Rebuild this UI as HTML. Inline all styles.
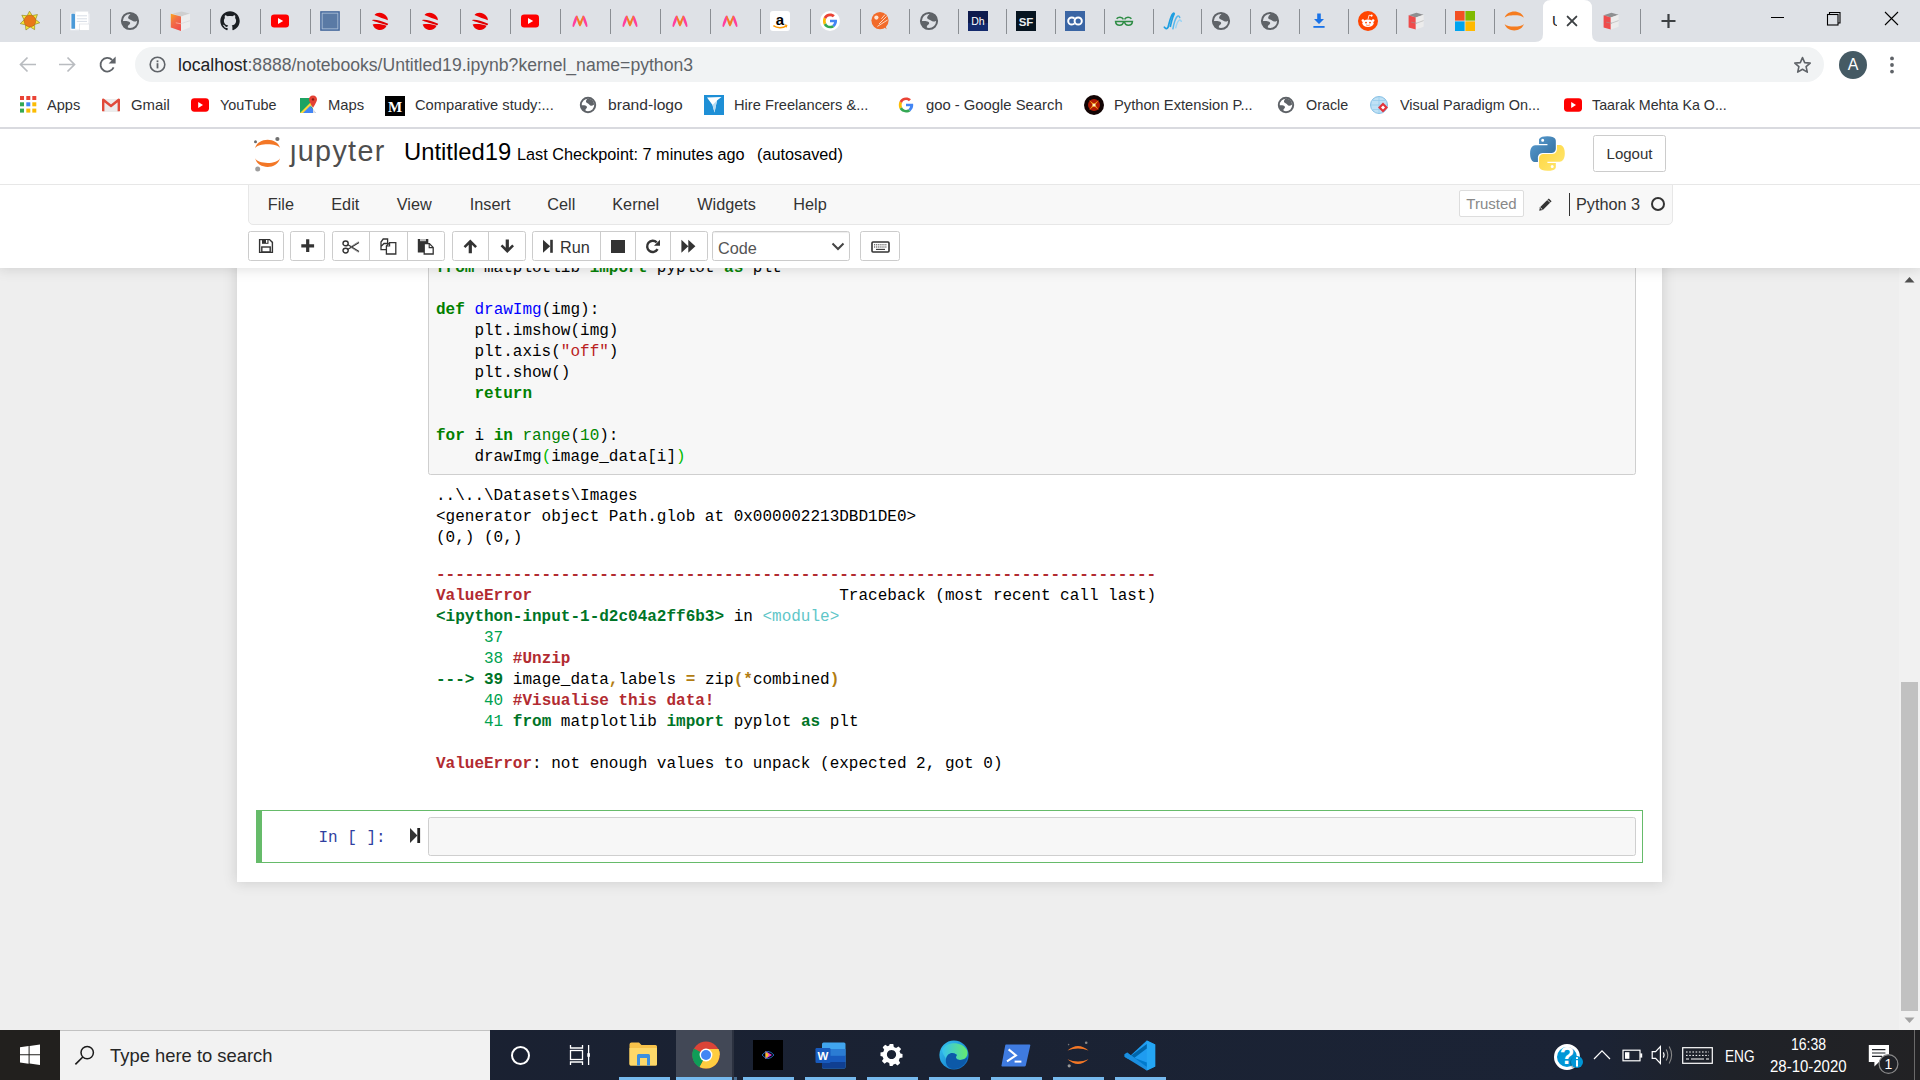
<!DOCTYPE html>
<html><head><meta charset="utf-8">
<style>
*{box-sizing:border-box;margin:0;padding:0}
html,body{width:1920px;height:1080px;overflow:hidden;background:#eee;font-family:"Liberation Sans",sans-serif;position:relative}
.a{position:absolute}
#tabstrip{left:0;top:0;width:1920px;height:42px;background:#dee1e6}
.sep{position:absolute;top:9px;width:1px;height:25px;background:#8a8e93}
.fav{position:absolute;top:11px;width:20px;height:20px}
#toolbar{left:0;top:42px;width:1920px;height:44px;background:#fff}
#omni{left:135px;top:47px;width:1689px;height:35px;border-radius:17.5px;background:#f1f3f4}
#bmbar{left:0;top:86px;width:1920px;height:43px;background:#fff;border-bottom:2px solid #d9dadf;z-index:8}
.bm{position:absolute;z-index:9;top:95px;height:20px;font-size:14.5px;color:#303134;line-height:20px;white-space:nowrap}
.bmi{position:absolute;top:96px;width:17px;height:17px}
#jhead{left:0;top:128px;width:1920px;height:140px;background:#fff;box-shadow:0 0 12px 1px rgba(87,87,87,0.2);z-index:5}
#nb{left:237px;top:200px;width:1425px;height:682px;background:#fff;box-shadow:0 0 12px 1px rgba(87,87,87,0.2)}
.mono{font-family:"Liberation Mono",monospace;font-size:16px;line-height:21px;white-space:pre;color:#000}
.kw{color:#008000;font-weight:bold}
.df{color:#00f}
.bi{color:#008000}
.nm{color:#080}
.st{color:#BA2121}
.mb{color:#0b0}
.ar{color:#b22b31;font-weight:bold}
.ari{color:#b22b31;font-weight:bold}
.agi{color:#007427;font-weight:bold}
.ag{color:#00a250}
.ac{color:#60c6c8}
.ay{color:#b27d12;font-weight:bold}
.tb{top:231px;height:30px;background:#fff;border:1px solid #ccc;border-radius:2.5px}
.dv{top:232px;width:1px;height:28px;background:#ccc}
#scroll{left:1899px;top:268px;width:21px;height:762px;background:#f1f1f1}
#taskbar{left:0;top:1030px;width:1920px;height:50px;background:linear-gradient(90deg,#1a2030 0%,#1a2233 50%,#1b2335 83%,#1f2228 90%,#222224 100%)}
</style></head><body>

<!-- ============ TAB STRIP ============ -->
<div id="tabstrip" class="a"></div>
<!--TABS-->
<div class="sep" style="left:60px"></div>
<div class="sep" style="left:110px"></div>
<div class="sep" style="left:160px"></div>
<div class="sep" style="left:210px"></div>
<div class="sep" style="left:260px"></div>
<div class="sep" style="left:310px"></div>
<div class="sep" style="left:360px"></div>
<div class="sep" style="left:410px"></div>
<div class="sep" style="left:460px"></div>
<div class="sep" style="left:510px"></div>
<div class="sep" style="left:560px"></div>
<div class="sep" style="left:610px"></div>
<div class="sep" style="left:660px"></div>
<div class="sep" style="left:710px"></div>
<div class="sep" style="left:760px"></div>
<div class="sep" style="left:810px"></div>
<div class="sep" style="left:860px"></div>
<div class="sep" style="left:909px"></div>
<div class="sep" style="left:958px"></div>
<div class="sep" style="left:1006px"></div>
<div class="sep" style="left:1055px"></div>
<div class="sep" style="left:1104px"></div>
<div class="sep" style="left:1153px"></div>
<div class="sep" style="left:1201px"></div>
<div class="sep" style="left:1250px"></div>
<div class="sep" style="left:1299px"></div>
<div class="sep" style="left:1348px"></div>
<div class="sep" style="left:1396px"></div>
<div class="sep" style="left:1445px"></div>
<div class="sep" style="left:1494px"></div>
<div class="sep" style="left:1640px"></div>
<svg class="fav" style="left:20px" viewBox="0 0 20 20"><path d="M9.48,0.21 L12.24,4.58 L17.45,3.57 L15.59,8.45 L19.73,11.78 L14.66,13.48 L14.61,18.64 L10.15,15.89 L5.94,19.00 L5.45,13.87 L0.25,12.58 L4.10,8.93 L1.83,4.22 L7.12,4.80 Z" fill="#f5ea3c" stroke="#8a7a10" stroke-width="0.6" stroke-linejoin="round"/><circle cx="9.9" cy="10" r="5.9" fill="#e8781a" stroke="#9a4a08" stroke-width="0.4"/></svg>
<svg class="fav" style="left:70px" viewBox="0 0 20 20"><rect x="0.4" y="2.6" width="19" height="16.6" fill="#fafbfd"/><rect x="5.2" y="0.4" width="13" height="18" fill="#fff" stroke="#e3e6ea" stroke-width="0.4"/><rect x="1.4" y="2.8" width="3.6" height="15" rx="0.6" fill="#4b9ad8"/><path d="M6.8,4.8 H17 M6.8,7.8 H17 M6.8,10.4 H17" stroke="#d7dde6" stroke-width="1"/><rect x="9.6" y="13" width="9.6" height="6.4" fill="#fff" stroke="#d0d4da" stroke-width="0.5"/></svg>
<svg class="fav" style="left:120px" viewBox="0 0 20 20"><circle cx="10" cy="10" r="8.1" fill="none" stroke="#5f6368" stroke-width="2"/><path d="M11.1,2.2 C9.5,4 7.4,6.2 8.4,7.4 C9.6,8.6 11.4,8.6 12.4,9.8 C13.4,11 15.6,10.8 17.6,9.4 L17.8,8 C17,5 14,2.2 11.1,2.2 Z" fill="#5f6368"/><path d="M2,10.2 C4.5,10 7.6,9.8 9.2,10.8 C10.8,11.8 10.4,13.2 8.6,14.2 C7.6,14.8 7.6,16.4 8.4,18.2 C5,17.6 2.2,14.4 2,10.2 Z" fill="#5f6368"/></svg>
<svg class="fav" style="left:170px" viewBox="0 0 20 20"><defs><linearGradient id="cgr" x1="0" y1="0" x2="0.6" y2="1"><stop offset="0" stop-color="#fca71c"/><stop offset="0.45" stop-color="#f26f45"/><stop offset="1" stop-color="#f04f4a"/></linearGradient></defs><path d="M2.8,2.6 L11.6,0.6 L19.6,2.4 L11,5.6 Z" fill="#cfcfcf"/><path d="M0.8,2.8 L11,5.6 V19.9 L0.8,16.6 Z" fill="url(#cgr)"/><path d="M11,5.6 L20.4,2.6 V16 L11,19.9 Z" fill="#ededed"/><path d="M11,12.6 L20.4,9.6" stroke="#dcdcdc" stroke-width="0.9"/><path d="M5.8,11.8 L11,12.8" stroke="#f7b4a6" stroke-width="0.8"/></svg>
<svg class="fav" style="left:220px" viewBox="0 0 20 20"><path fill="#1b1f23" fill-rule="evenodd" d="M10,0.3C4.6,0.3 0.3,4.6 0.3,10C0.3,14.3 3.1,17.9 6.9,19.2C7.4,19.3 7.6,19 7.6,18.7V17C4.9,17.6 4.3,15.8 4.3,15.8C3.9,14.7 3.2,14.4 3.2,14.4C2.3,13.8 3.3,13.8 3.3,13.8C4.3,13.9 4.8,14.8 4.8,14.8C5.7,16.3 7.1,15.9 7.6,15.6C7.7,15 8,14.5 8.3,14.3C6.2,14.1 3.9,13.2 3.9,9.5C3.9,8.4 4.3,7.6 4.9,6.9C4.8,6.6 4.5,5.6 5,4.3C5,4.3 5.8,4 7.7,5.3C8.5,5.1 9.2,5 10,5C10.8,5 11.6,5.1 12.3,5.3C14.2,4 15,4.3 15,4.3C15.5,5.6 15.2,6.6 15.1,6.9C15.7,7.6 16.1,8.4 16.1,9.5C16.1,13.2 13.8,14.1 11.7,14.3C12,14.6 12.4,15.2 12.4,16.1V18.7C12.4,19 12.6,19.3 13.1,19.2C16.9,17.9 19.7,14.3 19.7,10C19.7,4.6 15.4,0.3 10,0.3Z"/></svg>
<svg class="fav" style="left:270px" viewBox="0 0 20 20"><rect x="1" y="3.5" width="18" height="13" rx="3.2" fill="#f00"/><path d="M8,7 L13.2,10 L8,13 Z" fill="#fff"/></svg>
<svg class="fav" style="left:320px" viewBox="0 0 20 20"><rect x="0.2" y="0.2" width="19.6" height="19.6" fill="#3f649a"/><rect x="1.6" y="1.6" width="16.8" height="16.8" fill="#a9bcd6"/><rect x="2.6" y="2.6" width="14.8" height="14.8" fill="#5a7aa5"/></svg>
<svg class="fav" style="left:370px" viewBox="0 0 20 20"><path d="M4.5,4 C7,1 13,0.6 17.2,6.2 C17.6,7.2 18,8.8 17.8,9.2 C14,7.6 9.4,6.4 4.5,4 Z" fill="#e00"/><path d="M1.8,9.2 C5,8 10,9.6 18.2,12.8 C18,13.8 17.4,14.4 17,14.2 C12,12.4 5,10.8 1.8,9.2 Z" fill="#d00"/><path d="M2.6,13.4 C7,12.6 12,13 16.6,14.8 C14.8,18.6 11,19.6 8,18.8 C5.4,18 3.6,16 2.6,13.4 Z" fill="#e00"/></svg>
<svg class="fav" style="left:420px" viewBox="0 0 20 20"><path d="M4.5,4 C7,1 13,0.6 17.2,6.2 C17.6,7.2 18,8.8 17.8,9.2 C14,7.6 9.4,6.4 4.5,4 Z" fill="#e00"/><path d="M1.8,9.2 C5,8 10,9.6 18.2,12.8 C18,13.8 17.4,14.4 17,14.2 C12,12.4 5,10.8 1.8,9.2 Z" fill="#d00"/><path d="M2.6,13.4 C7,12.6 12,13 16.6,14.8 C14.8,18.6 11,19.6 8,18.8 C5.4,18 3.6,16 2.6,13.4 Z" fill="#e00"/></svg>
<svg class="fav" style="left:470px" viewBox="0 0 20 20"><path d="M4.5,4 C7,1 13,0.6 17.2,6.2 C17.6,7.2 18,8.8 17.8,9.2 C14,7.6 9.4,6.4 4.5,4 Z" fill="#e00"/><path d="M1.8,9.2 C5,8 10,9.6 18.2,12.8 C18,13.8 17.4,14.4 17,14.2 C12,12.4 5,10.8 1.8,9.2 Z" fill="#d00"/><path d="M2.6,13.4 C7,12.6 12,13 16.6,14.8 C14.8,18.6 11,19.6 8,18.8 C5.4,18 3.6,16 2.6,13.4 Z" fill="#e00"/></svg>
<svg class="fav" style="left:520px" viewBox="0 0 20 20"><rect x="1" y="3.5" width="18" height="13" rx="3.2" fill="#f00"/><path d="M8,7 L13.2,10 L8,13 Z" fill="#fff"/></svg>
<svg class="fav" style="left:570px" viewBox="0 0 20 20"><path d="M2.6,15.6 C2,14.6 4,8 5.8,5 C6.6,3.8 7.6,4.6 7.6,5.6 C7.2,9 5,14 3.8,15.8 C3.4,16.2 2.9,16.1 2.6,15.6 Z" fill="#ff3f9f"/><path d="M17.4,15.6 C18,14.6 16,8 14.2,5 C13.4,3.8 12.4,4.6 12.4,5.6 C12.8,9 15,14 16.2,15.8 C16.6,16.2 17.1,16.1 17.4,15.6 Z" fill="#ff3f9f"/><path d="M6.2,5.2 C7.2,4.2 8,5.6 10,10.8 C12,5.6 12.8,4.2 13.8,5.2 C13.2,9 11.6,14.2 10,15.6 C8.4,14.2 6.8,9 6.2,5.2 Z" fill="#f47f24"/></svg>
<svg class="fav" style="left:620px" viewBox="0 0 20 20"><path d="M2.6,15.6 C2,14.6 4,8 5.8,5 C6.6,3.8 7.6,4.6 7.6,5.6 C7.2,9 5,14 3.8,15.8 C3.4,16.2 2.9,16.1 2.6,15.6 Z" fill="#ff3f9f"/><path d="M17.4,15.6 C18,14.6 16,8 14.2,5 C13.4,3.8 12.4,4.6 12.4,5.6 C12.8,9 15,14 16.2,15.8 C16.6,16.2 17.1,16.1 17.4,15.6 Z" fill="#ff3f9f"/><path d="M6.2,5.2 C7.2,4.2 8,5.6 10,10.8 C12,5.6 12.8,4.2 13.8,5.2 C13.2,9 11.6,14.2 10,15.6 C8.4,14.2 6.8,9 6.2,5.2 Z" fill="#f47f24"/></svg>
<svg class="fav" style="left:670px" viewBox="0 0 20 20"><path d="M2.6,15.6 C2,14.6 4,8 5.8,5 C6.6,3.8 7.6,4.6 7.6,5.6 C7.2,9 5,14 3.8,15.8 C3.4,16.2 2.9,16.1 2.6,15.6 Z" fill="#ff3f9f"/><path d="M17.4,15.6 C18,14.6 16,8 14.2,5 C13.4,3.8 12.4,4.6 12.4,5.6 C12.8,9 15,14 16.2,15.8 C16.6,16.2 17.1,16.1 17.4,15.6 Z" fill="#ff3f9f"/><path d="M6.2,5.2 C7.2,4.2 8,5.6 10,10.8 C12,5.6 12.8,4.2 13.8,5.2 C13.2,9 11.6,14.2 10,15.6 C8.4,14.2 6.8,9 6.2,5.2 Z" fill="#f47f24"/></svg>
<svg class="fav" style="left:720px" viewBox="0 0 20 20"><path d="M2.6,15.6 C2,14.6 4,8 5.8,5 C6.6,3.8 7.6,4.6 7.6,5.6 C7.2,9 5,14 3.8,15.8 C3.4,16.2 2.9,16.1 2.6,15.6 Z" fill="#ff3f9f"/><path d="M17.4,15.6 C18,14.6 16,8 14.2,5 C13.4,3.8 12.4,4.6 12.4,5.6 C12.8,9 15,14 16.2,15.8 C16.6,16.2 17.1,16.1 17.4,15.6 Z" fill="#ff3f9f"/><path d="M6.2,5.2 C7.2,4.2 8,5.6 10,10.8 C12,5.6 12.8,4.2 13.8,5.2 C13.2,9 11.6,14.2 10,15.6 C8.4,14.2 6.8,9 6.2,5.2 Z" fill="#f47f24"/></svg>
<svg class="fav" style="left:770px" viewBox="0 0 20 20"><rect x="0" y="0" width="20" height="20" rx="3" fill="#fff"/><text x="10" y="13.6" text-anchor="middle" font-family="Liberation Sans" font-weight="bold" font-size="15" fill="#000">a</text><path d="M3.4,14.6 C7,17.2 12.6,17.4 16.4,14.8" fill="none" stroke="#f90" stroke-width="1.5"/><path d="M14.6,13.8 L16.8,14.4 L16.2,16.4" fill="none" stroke="#f90" stroke-width="1.1"/></svg>
<svg class="fav" style="left:820px" viewBox="0 0 20 20"><circle cx="10" cy="10" r="10" fill="#fff"/><g transform="translate(10 10) scale(1.3) translate(-10 -10)"><path d="M15.4,10.2 C15.4,9.8 15.4,9.4 15.3,9 H10 V11 H13.1 C12.9,12 12.4,12.7 11.6,13.2 L13.3,14.6 C14.6,13.4 15.4,11.9 15.4,10.2 Z" fill="#4285f4"/><path d="M10,15.6 C11.5,15.6 12.7,15.1 13.3,14.6 L11.6,13.2 C11.1,13.5 10.6,13.7 10,13.7 C8.6,13.7 7.4,12.8 7,11.5 L5.2,12.9 C6.1,14.6 7.9,15.6 10,15.6 Z" fill="#34a853"/><path d="M7,11.5 C6.8,11 6.7,10.5 6.7,10 C6.7,9.5 6.8,9 7,8.5 L5.2,7.1 C4.8,7.9 4.6,8.9 4.6,10 C4.6,11.1 4.8,12.1 5.2,12.9 Z" fill="#fbbc05"/><path d="M10,6.3 C10.9,6.3 11.6,6.6 12.2,7.1 L13.7,5.6 C12.7,4.8 11.5,4.3 10,4.3 C7.9,4.3 6.1,5.4 5.2,7.1 L7,8.5 C7.4,7.2 8.6,6.3 10,6.3 Z" fill="#ea4335"/></g></svg>
<svg class="fav" style="left:870px" viewBox="0 0 20 20"><circle cx="10" cy="9.6" r="8.6" fill="#f26b2a"/><path d="M13,15.6 L16.8,18.2 L14.6,13.6 Z" fill="#f26b2a"/><circle cx="6.4" cy="6.6" r="2.1" fill="#fde3d3"/><path d="M9,13 L16.6,5.4 M7.4,15.4 L17.6,9 M11.4,7.8 L15,3.6" stroke="#fde3d3" stroke-width="0.9"/></svg>
<svg class="fav" style="left:918.75px" viewBox="0 0 20 20"><circle cx="10" cy="10" r="8.1" fill="none" stroke="#5f6368" stroke-width="2"/><path d="M11.1,2.2 C9.5,4 7.4,6.2 8.4,7.4 C9.6,8.6 11.4,8.6 12.4,9.8 C13.4,11 15.6,10.8 17.6,9.4 L17.8,8 C17,5 14,2.2 11.1,2.2 Z" fill="#5f6368"/><path d="M2,10.2 C4.5,10 7.6,9.8 9.2,10.8 C10.8,11.8 10.4,13.2 8.6,14.2 C7.6,14.8 7.6,16.4 8.4,18.2 C5,17.6 2.2,14.4 2,10.2 Z" fill="#5f6368"/></svg>
<svg class="fav" style="left:968px" viewBox="0 0 20 20"><rect x="0" y="0" width="20" height="20" fill="#0e1b4d"/><rect x="0" y="12" width="20" height="8" fill="#17307a" opacity="0.7"/><text x="10" y="14.2" text-anchor="middle" font-family="Liberation Sans" font-size="10.5" fill="#fff">Dh</text></svg>
<svg class="fav" style="left:1015.9px" viewBox="0 0 20 20"><rect x="0" y="0" width="20" height="20" fill="#061420"/><text x="10" y="14.5" text-anchor="middle" font-family="Liberation Sans" font-weight="bold" font-size="11.5" fill="#e8eef2">SF</text></svg>
<svg class="fav" style="left:1065px" viewBox="0 0 20 20"><rect x="0" y="0" width="20" height="20" fill="#3a65a4"/><path d="M9.6,7.6 C8.8,6.8 7.8,6.4 6.8,6.4 C4.8,6.4 3.2,8 3.2,10 C3.2,12 4.8,13.6 6.8,13.6 C7.8,13.6 8.8,13.2 9.6,12.4" fill="none" stroke="#fff" stroke-width="2"/><circle cx="13.2" cy="10" r="3.6" fill="none" stroke="#fff" stroke-width="2"/></svg>
<svg class="fav" style="left:1114px" viewBox="0 0 20 20"><path d="M10,10.6 H1.6 C1.8,13 3.6,14.2 5.6,14.2 C7.6,14.2 9.2,12.8 9.6,10.6 M10,10.6 H18.4 C18.2,13 16.4,14.2 14.4,14.2 C12.4,14.2 10.8,12.8 10.4,10.6 M9.4,8.4 C8.8,7 7.6,6.2 6,6.2 C4.6,6.2 3.4,6.8 2.6,7.8 M10.6,8.4 C11.2,7 12.4,6.2 14,6.2 C15.4,6.2 16.6,6.8 17.4,7.8" fill="none" stroke="#2f8d46" stroke-width="1.5"/></svg>
<svg class="fav" style="left:1163px" viewBox="0 0 20 20"><path d="M1,15.6 C2.2,17.8 4,18.4 5,16.4 C6.4,12 7.4,5 10,2.6 C11,1.8 11.6,2.4 11,3.4 C9.4,6 8.2,12 7.2,16" fill="none" stroke="#1e9ee0" stroke-width="1.7"/><path d="M9.8,18.4 C11,12 12.6,6.6 14.6,5.2 C15.8,4.4 16.6,5.6 16.8,7.2" fill="none" stroke="#55b7ec" stroke-width="1.5"/><path d="M12.6,17.4 C13.6,12.8 14.8,9.6 16.6,9 C17.6,8.8 18.2,9.8 18.4,11" fill="none" stroke="#9bd4f4" stroke-width="1.4"/></svg>
<svg class="fav" style="left:1210.9px" viewBox="0 0 20 20"><circle cx="10" cy="10" r="8.1" fill="none" stroke="#5f6368" stroke-width="2"/><path d="M11.1,2.2 C9.5,4 7.4,6.2 8.4,7.4 C9.6,8.6 11.4,8.6 12.4,9.8 C13.4,11 15.6,10.8 17.6,9.4 L17.8,8 C17,5 14,2.2 11.1,2.2 Z" fill="#5f6368"/><path d="M2,10.2 C4.5,10 7.6,9.8 9.2,10.8 C10.8,11.8 10.4,13.2 8.6,14.2 C7.6,14.8 7.6,16.4 8.4,18.2 C5,17.6 2.2,14.4 2,10.2 Z" fill="#5f6368"/></svg>
<svg class="fav" style="left:1260px" viewBox="0 0 20 20"><circle cx="10" cy="10" r="8.1" fill="none" stroke="#5f6368" stroke-width="2"/><path d="M11.1,2.2 C9.5,4 7.4,6.2 8.4,7.4 C9.6,8.6 11.4,8.6 12.4,9.8 C13.4,11 15.6,10.8 17.6,9.4 L17.8,8 C17,5 14,2.2 11.1,2.2 Z" fill="#5f6368"/><path d="M2,10.2 C4.5,10 7.6,9.8 9.2,10.8 C10.8,11.8 10.4,13.2 8.6,14.2 C7.6,14.8 7.6,16.4 8.4,18.2 C5,17.6 2.2,14.4 2,10.2 Z" fill="#5f6368"/></svg>
<svg class="fav" style="left:1309px" viewBox="0 0 20 20"><path d="M8.2,2.6 H11.8 V8 H15 L10,13 L5,8 H8.2 Z" fill="#1a73e8"/><rect x="4.4" y="15" width="11.2" height="1.8" fill="#1a73e8"/></svg>
<svg class="fav" style="left:1358px" viewBox="0 0 20 20"><circle cx="10" cy="10" r="10" fill="#ff4500"/><ellipse cx="10" cy="12.2" rx="5.6" ry="3.8" fill="#fff"/><circle cx="4.9" cy="9.6" r="1.3" fill="#fff"/><circle cx="15.1" cy="9.6" r="1.3" fill="#fff"/><circle cx="13.6" cy="4.6" r="1.1" fill="#fff"/><path d="M10,8.4 L11,4.2 L13.6,4.8" fill="none" stroke="#fff" stroke-width="0.8"/><circle cx="8" cy="11.6" r="0.95" fill="#ff4500"/><circle cx="12" cy="11.6" r="0.95" fill="#ff4500"/><path d="M8,13.8 C9.2,14.6 10.8,14.6 12,13.8" fill="none" stroke="#ff4500" stroke-width="0.6"/></svg>
<svg class="fav" style="left:1405.6px" viewBox="0 0 20 20"><path d="M2.6,4.2 L10.4,1.8 L17.6,3.8 L9.8,6.4 Z" fill="#8e8f91"/><path d="M2.6,4.2 L9.8,6.4 L9.8,18.6 L2.6,16.4 Z" fill="#ee4b4b"/><path d="M9.8,6.4 L17.6,3.8 L17.6,15.8 L9.8,18.6 Z" fill="#ececec"/><path d="M9.8,12.4 L17.6,9.6" stroke="#bdbdbd" stroke-width="0.8"/><path d="M5.2,11.2 L10.6,12.2" stroke="#999" stroke-width="0.6"/></svg>
<svg class="fav" style="left:1455px" viewBox="0 0 20 20"><rect x="0" y="0" width="9.6" height="9.6" fill="#f25022"/><rect x="10.4" y="0" width="9.6" height="9.6" fill="#7fba00"/><rect x="0" y="10.4" width="9.6" height="9.6" fill="#00a4ef"/><rect x="10.4" y="10.4" width="9.6" height="9.6" fill="#ffb900"/></svg>
<svg class="fav" style="left:1503.75px" viewBox="0 0 20 20"><path d="M0.65,6.7 C3,-1.7 17.5,-1.7 19.85,6.7 C17.5,3.37 3,3.37 0.65,6.7Z" fill="#f57c1f"/><path d="M0.65,13 C3,21.53 17.5,21.53 19.85,13 C17.5,16.47 3,16.47 0.65,13Z" fill="#f57c1f"/></svg>
<svg class="fav" style="left:1601px" viewBox="0 0 20 20"><path d="M2.6,4.2 L10.4,1.8 L17.6,3.8 L9.8,6.4 Z" fill="#8e8f91"/><path d="M2.6,4.2 L9.8,6.4 L9.8,18.6 L2.6,16.4 Z" fill="#ee4b4b"/><path d="M9.8,6.4 L17.6,3.8 L17.6,15.8 L9.8,18.6 Z" fill="#ececec"/><path d="M9.8,12.4 L17.6,9.6" stroke="#bdbdbd" stroke-width="0.8"/><path d="M5.2,11.2 L10.6,12.2" stroke="#999" stroke-width="0.6"/></svg>
<!--/TABS-->

<!-- ============ TOOLBAR ============ -->
<div id="toolbar" class="a"></div>
<div id="omni" class="a"></div>
<div class="a" style="left:178px;top:53px;font-size:17.6px;line-height:24px;color:#5f6368;white-space:nowrap"><span style="color:#202124">localhost</span>:8888/notebooks/Untitled19.ipynb?kernel_name=python3</div>

<!-- ============ BOOKMARKS ============ -->
<div id="bmbar" class="a"></div>
<!--CHROME-->
<div class="a" style="left:0;top:0;z-index:9">
<svg class="a" style="left:1530px;top:0" width="76" height="42" viewBox="1530 0 76 42"><path d="M1535,42 Q1543,42 1543,34 V8 Q1543,0 1551,0 H1584 Q1592,0 1592,8 V34 Q1592,42 1600,42 Z" fill="#fff"/></svg>
<div class="a" style="left:1552px;top:12px;font-size:15px;line-height:18px;color:#202124;width:5px;overflow:hidden;white-space:nowrap">U</div>
<svg class="a" style="left:1566px;top:15px" width="12" height="12" viewBox="0 0 12 12"><path d="M1.6,1.6 L10.4,10.4 M10.4,1.6 L1.6,10.4" stroke="#3c4043" stroke-width="1.9" stroke-linecap="round"/></svg>
<svg class="a" style="left:1660px;top:13px" width="17" height="16" viewBox="0 0 17 16"><path d="M8.5,1 V15 M1.5,8 H15.5" stroke="#3c4043" stroke-width="2.2"/></svg>
<div class="a" style="left:1771px;top:17px;width:13px;height:1.2px;background:#000"></div>
<svg class="a" style="left:1826px;top:11px" width="16" height="15" viewBox="0 0 16 15"><rect x="1.5" y="3.5" width="10.5" height="10.5" fill="none" stroke="#000" stroke-width="1.1"/><path d="M3.5,3.5 V1.5 H14 V12 H12" fill="none" stroke="#000" stroke-width="1.1"/></svg>
<svg class="a" style="left:1884px;top:11px" width="15" height="15" viewBox="0 0 15 15"><path d="M1,1 L14,14 M14,1 L1,14" stroke="#000" stroke-width="1.1"/></svg>
<svg class="a" style="left:18px;top:55px" width="20" height="19" viewBox="0 0 20 19"><path d="M18,9.5 H3.5 M9.5,2.5 L2.5,9.5 L9.5,16.5" fill="none" stroke="#b9bcc0" stroke-width="1.7"/></svg>
<svg class="a" style="left:57px;top:55px" width="20" height="19" viewBox="0 0 20 19"><path d="M2,9.5 H16.5 M10.5,2.5 L17.5,9.5 L10.5,16.5" fill="none" stroke="#b9bcc0" stroke-width="1.7"/></svg>
<svg class="a" style="left:98px;top:55px" width="20" height="20" viewBox="0 0 20 20"><path d="M15.6,12.4 A6.8,6.8 0 1 1 14.2,5" fill="none" stroke="#5f6368" stroke-width="1.8"/><path d="M17.6,1.6 V8.6 H10.6 Z" fill="#5f6368"/></svg>
<svg class="a" style="left:149px;top:56px" width="17" height="17" viewBox="0 0 17 17"><circle cx="8.5" cy="8.5" r="7.3" fill="none" stroke="#5f6368" stroke-width="1.6"/><rect x="7.6" y="7.2" width="1.8" height="5.2" fill="#5f6368"/><rect x="7.6" y="4.4" width="1.8" height="1.8" fill="#5f6368"/></svg>
<svg class="a" style="left:1793px;top:56px" width="19" height="18" viewBox="0 0 19 18"><path d="M9.5,1.6 L11.7,6.6 L17.2,7.1 L13.1,10.7 L14.3,16.1 L9.5,13.3 L4.7,16.1 L5.9,10.7 L1.8,7.1 L7.3,6.6 Z" fill="none" stroke="#5f6368" stroke-width="1.6" stroke-linejoin="round"/></svg>
<div class="a" style="left:1839px;top:51px;width:28px;height:28px;border-radius:50%;background:#455a64;color:#fff;font-size:16px;line-height:28px;text-align:center">A</div>
<svg class="a" style="left:1889px;top:56px" width="6" height="18" viewBox="0 0 6 18"><circle cx="3" cy="2.4" r="1.9" fill="#5f6368"/><circle cx="3" cy="9" r="1.9" fill="#5f6368"/><circle cx="3" cy="15.6" r="1.9" fill="#5f6368"/></svg>
<div class="bm" style="left:47.4px;font-size:15px;transform:scaleX(0.971);transform-origin:0 0">Apps</div>
<div class="bm" style="left:130.5px;font-size:15px;transform:scaleX(0.993);transform-origin:0 0">Gmail</div>
<div class="bm" style="left:219.9px;font-size:15px;transform:scaleX(0.959);transform-origin:0 0">YouTube</div>
<div class="bm" style="left:327.5px;font-size:15px;transform:scaleX(0.986);transform-origin:0 0">Maps</div>
<div class="bm" style="left:414.7px;font-size:15px;transform:scaleX(0.979);transform-origin:0 0">Comparative study:...</div>
<div class="bm" style="left:607.5px;font-size:15px;transform:scaleX(1.042);transform-origin:0 0">brand-logo</div>
<div class="bm" style="left:733.8px;font-size:15px;transform:scaleX(0.977);transform-origin:0 0">Hire Freelancers &amp;...</div>
<div class="bm" style="left:926.1px;font-size:15px;transform:scaleX(0.987);transform-origin:0 0">goo - Google Search</div>
<div class="bm" style="left:1113.8px;font-size:15px;transform:scaleX(0.980);transform-origin:0 0">Python Extension P...</div>
<div class="bm" style="left:1306.1px;font-size:15px;transform:scaleX(0.955);transform-origin:0 0">Oracle</div>
<div class="bm" style="left:1400.1px;font-size:15px;transform:scaleX(0.962);transform-origin:0 0">Visual Paradigm On...</div>
<div class="bm" style="left:1592.4px;font-size:15px;transform:scaleX(0.951);transform-origin:0 0">Taarak Mehta Ka O...</div>
<div class="a" style="left:19.9px;top:96px;line-height:0"><svg width="17" height="17" viewBox="0 0 17 17"><rect x="0" y="0" width="4" height="4" fill="#ea4335"/><rect x="6.3" y="0" width="4" height="4" fill="#ea4335"/><rect x="12.3" y="0" width="4" height="4" fill="#ea4335"/><rect x="0" y="6.3" width="4" height="4" fill="#34a853"/><rect x="6.3" y="6.3" width="4" height="4" fill="#4285f4"/><rect x="12.3" y="6.3" width="4" height="4" fill="#fbbc04"/><rect x="0" y="12.6" width="4" height="4" fill="#34a853"/><rect x="6.3" y="12.6" width="4" height="4" fill="#fbbc04"/><rect x="12.3" y="12.6" width="4" height="4" fill="#fbbc04"/></svg></div>
<div class="a" style="left:102px;top:98px;line-height:0"><svg width="18" height="14" viewBox="0 0 18 14"><rect x="1" y="1" width="16" height="13" fill="#ececec"/><path d="M1.2,13.2 V1.8 L9,8 L16.8,1.8 V13.2" fill="none" stroke="#e04a3a" stroke-width="2.4" stroke-linejoin="round"/></svg></div>
<div class="a" style="left:191px;top:98px;line-height:0"><svg width="18" height="14" viewBox="0 0 18 14"><rect x="0" y="0.2" width="18" height="13.5" rx="3.4" fill="#f00"/><path d="M7.2,4 L12,7 L7.2,10 Z" fill="#fff"/></svg></div>
<div class="a" style="left:300px;top:95px;line-height:0"><svg width="18" height="19" viewBox="0 0 18 19"><path d="M0,3 H13 V18 H0 Z" fill="#1ea362"/><path d="M0,18 L13,5 V9 L4,18 Z" fill="#fdd835"/><path d="M3,18 L10,11 L16,18 Z" fill="#4285f4"/><path d="M11,11 L13,9 V18 L16,18" fill="#e0e0e0"/><path d="M13,0.4 C10.4,0.4 9,2.4 9,4.4 C9,7 13,12 13,13 C13,12 17,7 17,4.4 C17,2.4 15.6,0.4 13,0.4 Z" fill="#e44134"/><circle cx="13" cy="4.4" r="1.2" fill="#8b1a12"/></svg></div>
<div class="a" style="left:385px;top:96px;line-height:0"><svg width="20" height="20" viewBox="0 0 20 20"><rect width="20" height="20" fill="#000"/><text x="10" y="15.5" text-anchor="middle" font-family="Liberation Serif" font-weight="bold" font-size="15" fill="#fff">M</text></svg></div>
<div class="a" style="left:579px;top:96px;line-height:0"><svg width="18" height="18" viewBox="0 0 20 20"><circle cx="10" cy="10" r="8" fill="none" stroke="#5f6368" stroke-width="2.2"/><path d="M9.2,3 C8,4.6 7.2,6.2 8.2,7.2 C9.3,8.2 10.8,8.2 11.6,9.8 C12.2,11 14.6,11.2 16.6,9.6 C17.2,6 14,2.6 9.2,3 Z" fill="#5f6368"/><path d="M2.4,10.6 C4.6,10.2 7.2,10.2 8.4,11.4 C9.6,12.6 8.4,13.8 7.4,14.6 C6.8,15.2 7.4,16.8 8,17.6 C5,16.8 2.6,14 2.4,10.6 Z" fill="#5f6368"/></svg></div>
<div class="a" style="left:704px;top:95px;line-height:0"><svg width="20" height="20" viewBox="0 0 20 20"><rect width="20" height="20" fill="#1e8fd6"/><path d="M3,2.5 L17.5,2 L13,5.5 L10.5,17.5 L8.5,10 Z" fill="#fff"/><path d="M8.5,10 L13,5.5 L10.5,17.5 Z" fill="#b9dcf2"/></svg></div>
<div class="a" style="left:898px;top:97px;line-height:0"><svg width="16" height="16" viewBox="4 4 12 12"><path d="M15.4,10.2 C15.4,9.8 15.4,9.4 15.3,9 H10 V11 H13.1 C12.9,12 12.4,12.7 11.6,13.2 L13.3,14.6 C14.6,13.4 15.4,11.9 15.4,10.2 Z" fill="#4285f4"/><path d="M10,15.6 C11.5,15.6 12.7,15.1 13.3,14.6 L11.6,13.2 C11.1,13.5 10.6,13.7 10,13.7 C8.6,13.7 7.4,12.8 7,11.5 L5.2,12.9 C6.1,14.6 7.9,15.6 10,15.6 Z" fill="#34a853"/><path d="M7,11.5 C6.8,11 6.7,10.5 6.7,10 C6.7,9.5 6.8,9 7,8.5 L5.2,7.1 C4.8,7.9 4.6,8.9 4.6,10 C4.6,11.1 4.8,12.1 5.2,12.9 Z" fill="#fbbc05"/><path d="M10,6.3 C10.9,6.3 11.6,6.6 12.2,7.1 L13.7,5.6 C12.7,4.8 11.5,4.3 10,4.3 C7.9,4.3 6.1,5.4 5.2,7.1 L7,8.5 C7.4,7.2 8.6,6.3 10,6.3 Z" fill="#ea4335"/></svg></div>
<div class="a" style="left:1084px;top:95px;line-height:0"><svg width="20" height="20" viewBox="0 0 20 20"><circle cx="10" cy="10" r="10" fill="#120404"/><circle cx="10" cy="10" r="6" fill="#b01a05"/><path d="M5,5 L10,9 L15,5 L11,10 L15,15 L10,11 L5,15 L9,10 Z" fill="#ffb21e"/><circle cx="10" cy="10" r="1.6" fill="#fff4c0"/></svg></div>
<div class="a" style="left:1277px;top:96px;line-height:0"><svg width="18" height="18" viewBox="0 0 20 20"><circle cx="10" cy="10" r="8" fill="none" stroke="#5f6368" stroke-width="2.2"/><path d="M9.2,3 C8,4.6 7.2,6.2 8.2,7.2 C9.3,8.2 10.8,8.2 11.6,9.8 C12.2,11 14.6,11.2 16.6,9.6 C17.2,6 14,2.6 9.2,3 Z" fill="#5f6368"/><path d="M2.4,10.6 C4.6,10.2 7.2,10.2 8.4,11.4 C9.6,12.6 8.4,13.8 7.4,14.6 C6.8,15.2 7.4,16.8 8,17.6 C5,16.8 2.6,14 2.4,10.6 Z" fill="#5f6368"/></svg></div>
<div class="a" style="left:1370px;top:96px;line-height:0"><svg width="19" height="19" viewBox="0 0 19 19"><circle cx="9" cy="9" r="8.5" fill="#bfe1f5" stroke="#6fb3de" stroke-width="0.8"/><path d="M1,9 H17 M9,1 V17 M3,4.5 H15 M3,13.5 H15" stroke="#8cc6ea" stroke-width="0.6"/><path d="M8,11.5 L13,6.5 L18,11.5 L13,16.5 Z" fill="#e3333b"/><path d="M11,11.5 L13,9.5 L15,11.5 L13,13.5 Z" fill="#fff"/></svg></div>
<div class="a" style="left:1564px;top:98px;line-height:0"><svg width="18" height="14" viewBox="0 0 18 14"><rect x="0" y="0.2" width="18" height="13.5" rx="3.4" fill="#f00"/><path d="M7.2,4 L12,7 L7.2,10 Z" fill="#fff"/></svg></div>
</div>
<!--/CHROME-->

<!-- ============ JUPYTER ============ -->
<div id="nb" class="a"></div>

<!-- code cell 1 input -->
<div class="a" style="left:428px;top:200px;width:1208px;height:275px;background:#f7f7f7;border:1px solid #cfcfcf;border-radius:2.5px"></div>
<div class="a mono" style="left:436px;top:258px"><span class="kw">from</span> matplotlib <span class="kw">import</span> pyplot <span class="kw">as</span> plt

<span class="kw">def</span> <span class="df">drawImg</span>(img):
    plt.imshow(img)
    plt.axis(<span class="st">"off"</span>)
    plt.show()
    <span class="kw">return</span>

<span class="kw">for</span> i <span class="kw">in</span> <span class="bi">range</span>(<span class="nm">10</span>):
    drawImg<span class="mb">(</span>image_data[i]<span class="mb">)</span></div>

<!-- outputs -->
<div class="a mono" style="left:436px;top:486px">..\..\Datasets\Images
&lt;generator object Path.glob at 0x000002213DBD1DE0&gt;
(0,) (0,)</div>
<div class="a mono" style="left:436px;top:565px"><span class="ar">---------------------------------------------------------------------------</span>
<span class="ari">ValueError</span>                                Traceback (most recent call last)
<span class="agi">&lt;ipython-input-1-d2c04a2ff6b3&gt;</span> in <span class="ac">&lt;module&gt;</span>
<span class="ag">     37</span>
<span class="ag">     38</span> <span class="ari">#Unzip</span>
<span class="agi">---&gt; 39</span> image_data<span class="ay">,</span>labels <span class="ay">=</span> zip<span class="ay">(</span><span class="ay">*</span>combined<span class="ay">)</span>
<span class="ag">     40</span> <span class="ari">#Visualise this data!</span>
<span class="ag">     41</span> <span class="agi">from</span> matplotlib <span class="agi">import</span> pyplot <span class="agi">as</span> plt

<span class="ari">ValueError</span>: not enough values to unpack (expected 2, got 0)</div>

<!-- active cell -->
<div class="a" style="left:256px;top:810px;width:1387px;height:53px;border:1px solid #66bb6a;border-left:6px solid #66bb6a"></div>
<div class="a mono" style="left:318.5px;top:828px;color:#303f9f">In [ ]:</div>
<svg class="a" style="left:410px;top:828px" width="11" height="16" viewBox="0 0 11 16"><path d="M0,0 L7.4,7.5 L0,15 Z" fill="#333"/><rect x="7.3" y="0" width="2.8" height="15" fill="#222"/></svg>
<div class="a" style="left:428px;top:817px;width:1208px;height:39px;background:#f7f7f7;border:1px solid #cfcfcf;border-radius:2.5px"></div>

<div id="jhead" class="a"></div>
<div id="hdr" class="a" style="left:0;top:0;z-index:6">
  <!-- full width line -->
  <div class="a" style="left:0;top:184px;width:1920px;height:1px;background:#e7e7e7"></div>
  <!-- logo -->
  <svg class="a" style="left:250px;top:132px" width="40" height="44" viewBox="0 0 40 44">
    <path d="M5.1,16.3 C7.6,4.85 27.6,4.85 30.1,16.2 C27.6,10.85 7.6,10.85 5.1,16.3Z" fill="#f37726"/>
    <path d="M5.1,26.1 C7.6,37.93 27.5,37.93 30,26.3 C27.5,32.6 7.6,32.6 5.1,26.1Z" fill="#f37726"/>
    <circle cx="5.5" cy="9.8" r="1.5" fill="#6b6b6b"/>
    <circle cx="27.4" cy="7" r="2.1" fill="#707070"/>
    <circle cx="7.7" cy="36.9" r="2.5" fill="#9e9e9e"/>
  </svg>
  <svg class="a" style="left:285px;top:132px" width="105" height="40" viewBox="0 0 105 40">
    <text x="5" y="28.8" font-family="Liberation Sans" font-size="28.7" fill="#4e4e4e" textLength="94.3" lengthAdjust="spacing">&#x237;upyter</text>
  </svg>
  <div class="a" style="left:404px;top:138px;font-size:23.8px;line-height:28px;color:#000;white-space:nowrap">Untitled19</div>
  <div class="a" style="left:517px;top:144px;font-size:16.25px;line-height:20px;color:#000;white-space:nowrap">Last Checkpoint: 7 minutes ago</div>
  <div class="a" style="left:757px;top:144px;font-size:16.25px;line-height:20px;color:#000;white-space:nowrap">(autosaved)</div>
  <!-- python logo -->
  <svg class="a" style="left:1530px;top:136px" width="35" height="35" viewBox="0 0 111 111">
    <defs>
      <linearGradient id="pyb" x1="0" y1="0" x2="1" y2="1"><stop offset="0" stop-color="#5a9fd4"/><stop offset="1" stop-color="#306998"/></linearGradient>
      <linearGradient id="pyy" x1="0" y1="0" x2="1" y2="1"><stop offset="0" stop-color="#ffd43b"/><stop offset="1" stop-color="#ffe873"/></linearGradient>
    </defs>
    <path fill="url(#pyb)" d="M54.9,0.5C26.9,0.5 28.6,12.7 28.6,12.7L28.7,25.3H55.4V29.1H18.1C18.1,29.1 0.2,27.1 0.2,55.3C0.2,83.5 15.8,82.5 15.8,82.5H25.1V69.4C25.1,69.4 24.6,53.8 40.5,53.8H67C67,53.8 81.9,54 81.9,39.4V15.3C81.9,15.3 84.2,0.5 54.9,0.5ZM40.2,8.9A4.8,4.8 0 1 1 40.2,18.5A4.8,4.8 0 1 1 40.2,8.9Z"/>
    <path fill="url(#pyy)" d="M55.7,110.2C83.7,110.2 82,98 82,98L81.9,85.4H55.2V81.6H92.5C92.5,81.6 110.4,83.6 110.4,55.4C110.4,27.2 94.8,28.2 94.8,28.2H85.5V41.3C85.5,41.3 86,56.9 70.1,56.9H43.6C43.6,56.9 28.7,56.7 28.7,71.3V95.4C28.7,95.4 26.4,110.2 55.7,110.2ZM70.4,101.8A4.8,4.8 0 1 1 70.4,92.2A4.8,4.8 0 1 1 70.4,101.8Z"/>
  </svg>
  <div class="a" style="left:1593px;top:135px;width:73px;height:37px;border:1px solid #ccc;border-radius:2.5px;font-size:15px;line-height:35px;text-align:center;color:#333">Logout</div>

  <!-- menubar -->
  <div class="a" style="left:248px;top:184px;width:1425px;height:41px;background:#f8f8f8;border:1px solid #e7e7e7;border-radius:0 0 5px 5px"></div>
  <div class="a" style="left:0.75px;top:194px;font-size:16.25px;line-height:20px;color:#333;white-space:nowrap">
    <span class="a" style="left:267px">File</span>
    <span class="a" style="left:330.5px">Edit</span>
    <span class="a" style="left:396px">View</span>
    <span class="a" style="left:469px">Insert</span>
    <span class="a" style="left:546.5px">Cell</span>
    <span class="a" style="left:611.5px">Kernel</span>
    <span class="a" style="left:696.5px">Widgets</span>
    <span class="a" style="left:792.5px">Help</span>
  </div>
  <div class="a" style="left:1459px;top:190px;width:65px;height:27px;border:1px solid #ddd;background:#fff;border-radius:2px;font-size:15px;line-height:25px;text-align:center;color:#888">Trusted</div>
  <svg class="a" style="left:1537px;top:196px" width="17" height="17" viewBox="0 0 17 17"><path d="M2.2,14.8 L3,11.2 L11.8,2.4 L14.6,5.2 L5.8,14 Z" fill="#333"/><path d="M3.2,11.5 L5.5,13.8" stroke="#f8f8f8" stroke-width="0.9"/><path d="M10.4,3.8 L13.2,6.6" stroke="#f8f8f8" stroke-width="0.9"/></svg>
  <div class="a" style="left:1569px;top:193px;width:1.3px;height:23px;background:#333"></div>
  <div class="a" style="left:1576px;top:194px;font-size:16.25px;line-height:20px;color:#333;white-space:nowrap">Python 3</div>
  <div class="a" style="left:1651px;top:197px;width:14px;height:14px;border:2.2px solid #333;border-radius:50%"></div>

  <!-- toolbar -->
  <div class="tb a" style="left:248px;width:36px"></div>
  <div class="tb a" style="left:290px;width:35px"></div>
  <div class="tb a" style="left:332px;width:113px"></div>
  <div class="a dv" style="left:369px"></div><div class="a dv" style="left:407px"></div>
  <div class="tb a" style="left:452px;width:74px"></div>
  <div class="a dv" style="left:488px"></div>
  <div class="tb a" style="left:532px;width:176px"></div>
  <div class="a dv" style="left:600px"></div><div class="a dv" style="left:635px"></div><div class="a dv" style="left:670px"></div>
  <div class="tb a" style="left:712px;width:138px;box-shadow:inset 0 1px 1px rgba(0,0,0,0.075)"></div>
  <div class="tb a" style="left:860px;width:40px"></div>
  <!-- icons -->
  <svg class="a" style="left:258px;top:238px" width="16" height="16" viewBox="0 0 16 16">
    <path d="M1.6,1.6 H11.6 L14.4,4.4 V14.4 H1.6 Z" fill="none" stroke="#333" stroke-width="1.4"/>
    <rect x="4" y="1.2" width="6.5" height="4.6" fill="#333"/>
    <rect x="8" y="2" width="1.4" height="2.8" fill="#fff"/>
    <rect x="3.8" y="9" width="8.4" height="5" fill="none" stroke="#333" stroke-width="1.4"/>
  </svg>
  <svg class="a" style="left:300px;top:238px" width="16" height="16" viewBox="0 0 16 16"><path d="M6.1,1.3 H9.3 V6.2 H14.1 V9.4 H9.3 V14 H6.1 V9.4 H1.3 V6.2 H6.1 Z" fill="#333"/></svg>
  <svg class="a" style="left:342px;top:239px" width="18" height="16" viewBox="0 0 18 16">
    <ellipse cx="3.6" cy="4.4" rx="2.6" ry="2.4" fill="none" stroke="#333" stroke-width="1.4"/>
    <ellipse cx="3.6" cy="11.6" rx="2.6" ry="2.4" fill="none" stroke="#333" stroke-width="1.4"/>
    <path d="M5.6,5.6 L17,12.6 M5.6,10.4 L17,3.4" stroke="#333" stroke-width="1.2"/>
    <path d="M9,7.5 L16.6,2.6 M9,8.5 L16.6,13.4" stroke="#777" stroke-width="0.7"/>
  </svg>
  <svg class="a" style="left:380px;top:238px" width="18" height="17" viewBox="0 0 18 17">
    <path d="M3.2,1 H7.6 V5.5 H4 L1,8.4 V4 Z M1,8.4 V11.6 H6" fill="none" stroke="#333" stroke-width="1.3"/>
    <path d="M7.6,1 L1,8.4" fill="none" stroke="#333" stroke-width="0"/>
    <path d="M9.6,4.6 H15.8 V16 H6.4 V8 Z" fill="#fff" stroke="#333" stroke-width="1.3"/>
    <path d="M6.4,8 H9.6 V4.6" fill="none" stroke="#333" stroke-width="1.2"/>
  </svg>
  <svg class="a" style="left:417px;top:238px" width="18" height="17" viewBox="0 0 18 17">
    <rect x="0.8" y="1" width="10.5" height="13.5" fill="#333"/>
    <rect x="3" y="1" width="6" height="2.2" fill="#bbb"/>
    <path d="M7.2,5.6 H12.4 L16.2,9.4 V16 H7.2 Z" fill="#fff" stroke="#333" stroke-width="1.3"/>
    <path d="M12.2,5.8 V9.6 H16" fill="none" stroke="#333" stroke-width="1.1"/>
  </svg>
  <svg class="a" style="left:463px;top:239px" width="15" height="15" viewBox="0 0 15 15"><path d="M7.3,0.6 L14,7.3 L12.2,9.1 L8.9,5.8 V14.2 H5.7 V5.8 L2.4,9.1 L0.6,7.3 Z" fill="#333"/></svg>
  <svg class="a" style="left:499.5px;top:238.5px" width="15" height="15" viewBox="0 0 15 15"><path d="M7.3,14 L14,7.3 L12.2,5.5 L8.9,8.8 V0.6 H5.7 V8.8 L2.4,5.5 L0.6,7.3 Z" fill="#333"/></svg>
  <svg class="a" style="left:542px;top:239px" width="12" height="15" viewBox="0 0 12 15"><path d="M1,0.8 L8.2,7.3 L1,13.8 Z" fill="#333"/><rect x="8.2" y="0.8" width="2.6" height="13" fill="#333"/></svg>
  <div class="a" style="left:560px;top:237px;font-size:16.25px;line-height:20px;color:#333">Run</div>
  <div class="a" style="left:611px;top:240px;width:14px;height:13px;background:#333"></div>
  <svg class="a" style="left:645px;top:239px" width="16" height="15" viewBox="0 0 16 15">
    <path d="M12.6,10.2 A5.6,5.6 0 1 1 11.7,3.4" fill="none" stroke="#333" stroke-width="2.4"/>
    <path d="M15,0.8 V6.8 H9 Z" fill="#333"/>
  </svg>
  <svg class="a" style="left:681px;top:239px" width="15" height="15" viewBox="0 0 15 15"><path d="M0.4,0.8 L7.3,7.3 L0.4,13.8 Z M7.3,0.8 L14.4,7.3 L7.3,13.8 Z" fill="#333"/></svg>
  <div class="a" style="left:718px;top:238px;font-size:16.25px;line-height:20px;color:#555">Code</div>
  <svg class="a" style="left:831px;top:242px" width="14" height="9" viewBox="0 0 14 9"><path d="M1.5,1.5 L7,7 L12.5,1.5" fill="none" stroke="#444" stroke-width="2"/></svg>
  <svg class="a" style="left:871px;top:241px" width="19" height="12" viewBox="0 0 19 12">
    <rect x="1" y="1" width="17" height="10" rx="1" fill="none" stroke="#333" stroke-width="1.6"/>
    <path d="M3,3.8 H16 M3,6 H16" stroke="#333" stroke-width="1" stroke-dasharray="1.2 0.9"/>
    <path d="M5,8.4 H14" stroke="#333" stroke-width="1.1"/>
  </svg>
</div>

<!-- scrollbar -->
<div id="scroll" class="a"></div>
<div class="a" style="left:1901px;top:682px;width:17px;height:329px;background:#c1c1c1"></div>
<svg class="a" style="left:1904px;top:276px" width="11" height="7" viewBox="0 0 11 7"><path d="M0.5,6.5 L5.5,1 L10.5,6.5 Z" fill="#505050"/></svg>
<svg class="a" style="left:1904px;top:1017px" width="11" height="7" viewBox="0 0 11 7"><path d="M0.5,0.5 L5.5,6 L10.5,0.5 Z" fill="#a3a3a3"/></svg>

<!-- ============ TASKBAR ============ -->
<div id="taskbar" class="a"></div>
<div class="a" style="left:0;top:1030px;width:60px;height:50px;background:#22201e"></div>
<div class="a" style="left:60px;top:1030px;width:430px;height:50px;background:#f2f2f2;border-top:1px solid #c2c2c2"></div>
<div class="a" style="left:110px;top:1043px;font-size:18.4px;line-height:26px;color:#262626;white-space:nowrap">Type here to search</div>
<!--TASK-->
<svg class="a" style="left:19px;top:1044px" width="22" height="22" viewBox="0 0 22 22"><path d="M1,3.2 L9.6,2 V10.3 H1 Z M10.6,1.9 L21,0.5 V10.3 H10.6 Z M1,11.3 H9.6 V19.8 L1,18.6 Z M10.6,11.3 H21 V21 L10.6,19.6 Z" fill="#fff"/></svg>
<svg class="a" style="left:74px;top:1044px" width="22" height="22" viewBox="0 0 22 22"><circle cx="13.2" cy="8.6" r="6.2" fill="none" stroke="#1b1b1b" stroke-width="1.5"/><path d="M8.8,13 L1.4,20.4" stroke="#1b1b1b" stroke-width="1.6"/></svg>
<div class="a" style="left:510.5px;top:1045.5px;width:19px;height:19px;border:2.2px solid #fff;border-radius:50%"></div>
<svg class="a" style="left:569px;top:1044px" width="23" height="22" viewBox="0 0 23 22"><path d="M1.5,1 V4 H13.5 V1 M1.5,21 V18 H13.5 V21" fill="none" stroke="#fff" stroke-width="1.3"/><rect x="1.5" y="6.5" width="12" height="9" fill="none" stroke="#fff" stroke-width="1.3"/><path d="M19.6,1 V21" stroke="#fff" stroke-width="1.3"/><rect x="18.3" y="9.2" width="2.6" height="3.6" fill="#fff"/></svg>
<div class="a" style="left:619px;top:1077px;width:51px;height:3px;background:#76b9ed"></div>
<div class="a" style="left:676px;top:1077px;width:56px;height:3px;background:#76b9ed"></div>
<div class="a" style="left:743px;top:1077px;width:51px;height:3px;background:#76b9ed"></div>
<div class="a" style="left:805px;top:1077px;width:51px;height:3px;background:#76b9ed"></div>
<div class="a" style="left:867px;top:1077px;width:51px;height:3px;background:#76b9ed"></div>
<div class="a" style="left:929px;top:1077px;width:51px;height:3px;background:#76b9ed"></div>
<div class="a" style="left:991px;top:1077px;width:51px;height:3px;background:#76b9ed"></div>
<div class="a" style="left:1053px;top:1077px;width:51px;height:3px;background:#76b9ed"></div>
<div class="a" style="left:1115px;top:1077px;width:51px;height:3px;background:#76b9ed"></div>
<div class="a" style="left:676px;top:1030px;width:56px;height:47px;background:#424856"></div>
<div class="a" style="left:732px;top:1030px;width:2px;height:50px;background:#2c3240"></div>
<div class="a" style="left:734px;top:1077px;width:3px;height:3px;background:#4a6f93"></div>
<svg class="a" style="left:629px;top:1042px" width="29" height="24" viewBox="0 0 29 24"><path d="M0.5,2.5 Q0.5,0.5 2.5,0.5 H10 L12.5,3 H26.5 Q28,3 28,4.5 V22 Q28,23.5 26.5,23.5 H2 Q0.5,23.5 0.5,22 Z" fill="#f7c24a"/><path d="M0.5,6 H28 V22 Q28,23.5 26.5,23.5 H2 Q0.5,23.5 0.5,22 Z" fill="#fdd869"/><path d="M8,23.5 V13.5 Q8,12 9.5,12 H19.5 Q21,12 21,13.5 V23.5 H18 V16 H11 V23.5 Z" fill="#3b8fe0"/></svg>
<svg class="a" style="left:691.5px;top:1041px" width="28" height="28" viewBox="0 0 28 28"><circle cx="14" cy="14" r="13.6" fill="#db4437"/><path d="M14,14 L1.9,7.6 A13.6,13.6 0 0 0 7.4,25.9 Z" fill="#0f9d58"/><path d="M14,14 L7.4,25.9 A13.6,13.6 0 0 0 27.6,14 L27.3,10.2 Z" fill="#ffcd40"/><path d="M14,8 H26.6 A13.6,13.6 0 0 1 27.6,14 L20.2,14 Z" fill="#ffcd40"/><path d="M14,14 L10.8,19.6 L7.4,25.9 A13.6,13.6 0 0 1 1.4,9.2 L8.8,17 Z" fill="#0f9d58"/><circle cx="14" cy="14" r="6.4" fill="#fff"/><circle cx="14" cy="14" r="5" fill="#4285f4"/></svg>
<div class="a" style="left:753px;top:1040px;width:30px;height:30px;background:#000"></div>
<svg class="a" style="left:760px;top:1047px" width="16" height="16" viewBox="0 0 16 16"><path d="M5.5,4 L12,8 L5.5,12 Z" fill="#e23ad6"/><path d="M5.5,4 L9,8 L5.5,12 Z" fill="#f6c21c"/><path d="M2,8 Q8,1 14,8 Q8,15 2,8" fill="none" stroke="#2a7fe0" stroke-width="0.8"/></svg>
<svg class="a" style="left:815px;top:1042px" width="31" height="27" viewBox="0 0 31 27"><rect x="7" y="0.5" width="23.5" height="26" rx="1.5" fill="#41a5ee"/><rect x="7" y="7" width="23.5" height="6.5" fill="#2b7cd3"/><rect x="7" y="13.5" width="23.5" height="6.5" fill="#185abd"/><path d="M7,20 H30.5 V25 Q30.5,26.5 29,26.5 H8.5 Q7,26.5 7,25 Z" fill="#103f91"/><rect x="0.5" y="6" width="15" height="15" rx="1.2" fill="#185abd"/><text x="8" y="18.2" text-anchor="middle" font-family="Liberation Sans" font-weight="bold" font-size="11.5" fill="#fff">W</text></svg>
<svg class="a" style="left:880px;top:1043px" width="23" height="23" viewBox="0 0 23 23"><g transform="translate(11.5 11.5)"><path fill="#fff" fill-rule="evenodd" d="M-1.8,-10.5 H1.8 L2.3,-7.6 L4.6,-6.5 L7,-8.1 L9.6,-5.6 L8,-3.2 L9,-0.9 L11,-0.4 V3 L8.3,3.6 L7.3,5.9 L8.7,8.4 L6.1,10.9 L3.8,9.3 L1.6,10.2 L1.1,11.5 H-1.8 L-2.3,8.6 L-4.6,7.6 L-7,9.2 L-9.6,6.6 L-8,4.3 L-9,2 L-11,1.5 V-1.9 L-8.3,-2.5 L-7.3,-4.8 L-8.8,-7.2 L-6.3,-9.8 L-3.9,-8.3 L-2.3,-9 Z M0,-4.6 A4.6,4.6 0 1 0 0.01,-4.6 Z"/></g></svg>
<svg class="a" style="left:939px;top:1040px" width="30" height="30" viewBox="0 0 30 30"><defs><linearGradient id="eg1" x1="0" y1="0" x2="1" y2="1"><stop offset="0" stop-color="#36c6f0"/><stop offset="0.6" stop-color="#1c8fd8"/><stop offset="1" stop-color="#0d5bb5"/></linearGradient><linearGradient id="eg2" x1="0" y1="0" x2="1" y2="0"><stop offset="0" stop-color="#35c1f1"/><stop offset="1" stop-color="#66eb6e"/></linearGradient></defs><circle cx="15" cy="15" r="14.6" fill="url(#eg1)"/><path d="M3,10 C6,2 22,0 28,10 C30,16 26,20 21,20 C17,20 16,17 18,15 C14,11 8,13 7,19 C5,15 3,13 3,10 Z" fill="url(#eg2)"/><path d="M7,19 C8,13 14,11 18,15 C16,17 17,20 21,20 C24,20 27,19 28.5,17 C27,25 20,29.5 14,29 C9,28.5 6,24 7,19 Z" fill="#0c59a8"/></svg>
<svg class="a" style="left:1001px;top:1044px" width="30" height="23" viewBox="0 0 30 23"><path d="M5,0.5 H28.5 Q29.6,0.5 29.3,1.6 L24.8,21.4 Q24.5,22.5 23.4,22.5 H1.3 Q0.2,22.5 0.5,21.4 L4.2,1.6 Q4.4,0.5 5,0.5 Z" fill="#3f7be0"/><path d="M7.6,5.4 L15,11.4 L6,17.4" fill="none" stroke="#fff" stroke-width="2"/><path d="M13.6,17.6 H20.4" stroke="#fff" stroke-width="2"/></svg>
<svg class="a" style="left:1066px;top:1041px" width="24" height="28" viewBox="0 0 24 28"><path d="M1.5,9.6 Q12,0.4 22.5,9.6 Q12,5.2 1.5,9.6Z" fill="#f37726"/><path d="M1.5,18.2 Q12,27.6 22.5,18.2 Q12,22.6 1.5,18.2Z" fill="#f37726"/><circle cx="2.6" cy="3.6" r="0.8" fill="#777"/><circle cx="20.2" cy="1.8" r="1.3" fill="#888"/><circle cx="3.2" cy="24.8" r="1.6" fill="#999"/></svg>
<svg class="a" style="left:1124px;top:1040px" width="32" height="31" viewBox="0 0 32 31"><path d="M22.8,0.6 L31.2,4.6 V26.4 L22.8,30.4 L6.6,15.5 Z" fill="#1f9cf0"/><path d="M22.8,0.6 V30.4 L31.2,26.4 V4.6 Z" fill="#24a6f4"/><path d="M22.8,8.4 L10.2,18 L3.2,12.6 L0.6,14.2 V16.8 L3.2,18.4 L22.8,4 Z" fill="#0065a9"/><path d="M0.6,14.2 L22.8,22.6 V27 L3.2,18.4 L0.6,16.8 Z" fill="#007acc"/><path d="M3.2,12.6 L22.8,27 V30.4 L0.6,16.8 V14.2 Z" fill="#1b8fe0"/></svg>
<div class="a" style="left:1554px;top:1044px;width:26px;height:26px;border-radius:50%;background:#0096d6;border:3px solid #fff"></div>
<div class="a" style="left:1557px;top:1043px;width:20px;font-size:24px;font-weight:bold;line-height:26px;color:#fff;text-align:center">?</div>
<div class="a" style="left:1570.9px;top:1055.9px;width:12.4px;height:12.4px;border-radius:50%;background:#0096d6;box-shadow:-1px 1px 1px rgba(0,0,0,0.3)"></div>
<svg class="a" style="left:1575px;top:1057px" width="4" height="10" viewBox="0 0 4 10"><rect x="1" y="0.2" width="2" height="1.8" fill="#fff"/><rect x="1" y="3.2" width="2" height="6.4" fill="#fff"/></svg>
<svg class="a" style="left:1593px;top:1049px" width="18" height="11" viewBox="0 0 18 11"><path d="M1,10 L9,1.8 L17,10" fill="none" stroke="#fff" stroke-width="1.2"/></svg>
<svg class="a" style="left:1622px;top:1049px" width="21" height="13" viewBox="0 0 21 13"><rect x="1" y="1.2" width="17" height="10.6" fill="none" stroke="#fff" stroke-width="1.2"/><rect x="18.2" y="4.4" width="2" height="4.2" fill="#fff"/><rect x="3" y="3.2" width="4.4" height="6.6" fill="#fff"/></svg>
<svg class="a" style="left:1651px;top:1045px" width="23" height="20" viewBox="0 0 23 20"><path d="M1.2,6.6 H4.6 L9.4,1.6 V18.4 L4.6,13.4 H1.2 Z" fill="none" stroke="#fff" stroke-width="1.2"/><path d="M12.4,7.4 Q13.8,10 12.4,12.6" fill="none" stroke="#fff" stroke-width="1.2"/><path d="M15.2,4.4 Q18.4,10 15.2,15.6" fill="none" stroke="#999" stroke-width="1.1"/><path d="M18.2,1.6 Q23,10 18.2,18.4" fill="none" stroke="#888" stroke-width="1.1"/></svg>
<svg class="a" style="left:1682px;top:1047px" width="31" height="17" viewBox="0 0 31 17"><rect x="0.7" y="0.7" width="29.6" height="15.6" fill="none" stroke="#fff" stroke-width="1.2"/><path d="M4,5 H27 M4,8.4 H27" stroke="#fff" stroke-width="1" stroke-dasharray="1.6 1.6"/><path d="M4,12 H7 M9,12 H22 M24,12 H27" stroke="#fff" stroke-width="1"/></svg>
<div class="a" style="left:1725px;top:1048px;font-size:15.6px;line-height:18px;color:#fff;transform:scaleX(0.875);transform-origin:0 0">ENG</div>
<div class="a" style="left:1791px;top:1036px;font-size:15.6px;line-height:18px;color:#fff;transform:scaleX(0.9);transform-origin:0 0">16:38</div>
<div class="a" style="left:1769.5px;top:1058px;font-size:15.6px;line-height:18px;color:#fff;transform:scaleX(0.96);transform-origin:0 0">28-10-2020</div>
<svg class="a" style="left:1866px;top:1043px" width="36" height="32" viewBox="0 0 36 32"><path d="M2.8,2 H23 V19 H13 L8.4,23.4 V19 H2.8 Z" fill="#fff"/><path d="M6,6.6 H19.4 M6,10 H19.4 M6,13.4 H16" stroke="#1f2227" stroke-width="1.2"/><circle cx="22.5" cy="21" r="9.4" fill="#1f2126" stroke="#8a8a8a" stroke-width="1.2"/><text x="22.5" y="26" text-anchor="middle" font-family="Liberation Sans" font-size="14" fill="#fff">1</text></svg>
<div class="a" style="left:1914px;top:1030px;width:1px;height:50px;background:#6a6a6a"></div>
<!--/TASK-->

</body></html>
